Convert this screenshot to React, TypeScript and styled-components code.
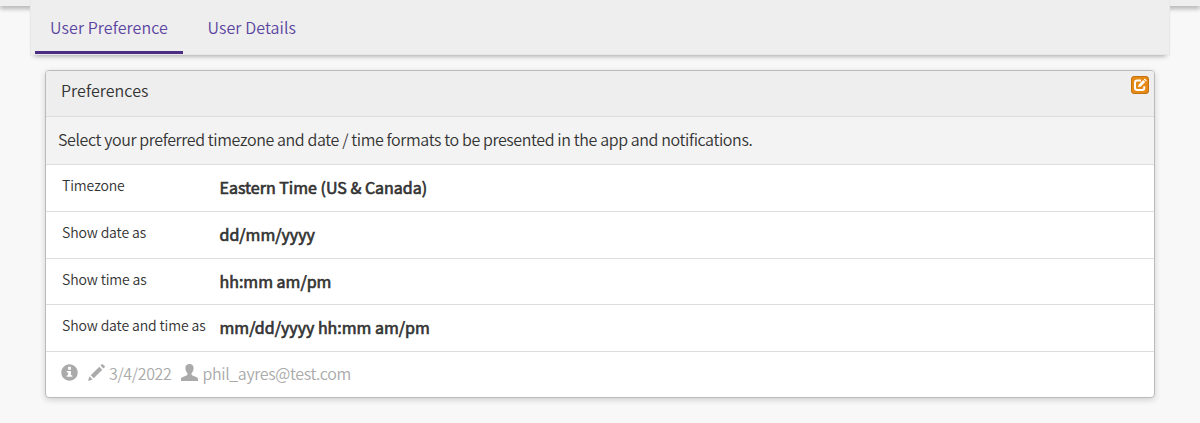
import React from "react";
import styled, { createGlobalStyle } from "styled-components";

const Global = createGlobalStyle`
  * { box-sizing: border-box; }
  body {
    margin: 0;
    background: #f8f8f8;
    color: #333;
    font-family: "Noto Sans CJK JP", "Noto Sans", sans-serif;
    font-size: 16px;
    font-weight: 350;
    line-height: 24px;
  }
`;

const Page = styled.div`
  height: 423px;
  overflow: hidden;
`;

const TopBar = styled.div`
  height: 6px;
  background: #eee;
  box-shadow: 0 3px 4px rgba(0, 0, 0, 0.27);
`;

const TabBar = styled.nav`
  position: relative;
  display: flex;
  align-items: flex-end;
  height: 55px;
  margin: -6px 30px 0;
  padding: 0 4px;
  background: #eee;
  border: 1px solid #e7e7e7;
  border-top: 0;
  box-shadow: 0 5px 5px -4px rgba(0, 0, 0, 0.35);
`;

const Tab = styled.a<{ $active?: boolean }>`
  height: 54px;
  padding: 15px 15px 0;
  margin-right: 9.5px;
  color: #5b45a0;
  letter-spacing: 0.1px;
  border-bottom: 3px solid ${(p) => (p.$active ? "#4b2e83" : "transparent")};
`;

const Card = styled.section`
  display: flex;
  flex-direction: column;
  height: 328px;
  margin: 15px 45px 0;
  background: #fff;
  border: 1px solid #bbb;
  border-radius: 4px;
  box-shadow: 0 2px 6px rgba(0, 0, 0, 0.16);
  overflow: hidden;
`;

const Heading = styled.header`
  display: flex;
  justify-content: space-between;
  height: 45px;
  padding: 5px 5px 0 15px;
  background: #eee;
`;

const Title = styled.div`
  padding-top: 2px;
  letter-spacing: 0.08px;
`;

const EditButton = styled.button`
  display: flex;
  align-items: center;
  justify-content: center;
  width: 18px;
  height: 18px;
  padding: 0;
  color: #fff;
  background: #e68a17;
  border: 1px solid #c5710c;
  border-radius: 3px;
`;

const Caption = styled.div`
  height: 48px;
  padding: 10px 12px 0;
  letter-spacing: -0.385px;
  background: #f3f3f3;
  border-top: 1px solid #ddd;
`;

const Row = styled.div<{ $height: number }>`
  display: flex;
  height: ${(p) => p.$height}px;
  border-top: 1px solid #ddd;
  padding: 8px 16px 0;
`;

const Label = styled.div`
  width: 157.5px;
  font-size: 14px;
  letter-spacing: -0.13px;
`;

const Value = styled.div`
  padding-top: 2px;
  font-weight: 400;
  -webkit-text-stroke: 0.65px #333;
`;

const Footer = styled.footer`
  display: flex;
  height: 46px;
  padding: 9px 15px 0;
  color: #aaa;
  letter-spacing: -0.35px;
  border-top: 1px solid #ddd;
`;

const Meta = styled.span<{ $gap: number }>`
  display: flex;
  margin-right: ${(p) => p.$gap}px;
`;

const Icon = styled.svg`
  width: 17px;
  height: 17px;
  margin: 3px 4px 0 0;
  fill: currentColor;
`;

const EditIcon = styled.svg`
  width: 14px;
  height: 14px;
`;

const preferences = [
  { label: "Timezone", value: "Eastern Time (US & Canada)", height: 47 },
  { label: "Show date as", value: "dd/mm/yyyy", height: 47 },
  { label: "Show time as", value: "hh:mm am/pm", height: 46 },
  { label: "Show date and time as", value: "mm/dd/yyyy hh:mm am/pm", height: 47 },
];

const InfoSign = () => (
  <Icon viewBox="0 0 1200 1200">
    <path
      transform="matrix(1 0 0 -1 0 1200)"
      d="M600 1178q118 0 225 -45.5t184.5 -123t123 -184.5t45.5 -225t-45.5 -225t-123 -184.5t-184.5 -123t-225 -45.5t-225 45.5t-184.5 123t-123 184.5t-45.5 225t45.5 225t123 184.5t184.5 123t225 45.5zM675 1000h-150q-10 0 -17.5 -7.5t-7.5 -17.5v-150q0 -10 7.5 -17.5t17.5 -7.5h150q10 0 17.5 7.5t7.5 17.5v150q0 10 -7.5 17.5t-17.5 7.5zM675 700h-250q-10 0 -17.5 -7.5t-7.5 -17.5v-50q0 -10 7.5 -17.5t17.5 -7.5h75v-200h-75q-10 0 -17.5 -7.5t-7.5 -17.5v-50q0 -10 7.5 -17.5t17.5 -7.5h350q10 0 17.5 7.5t7.5 17.5v50q0 10 -7.5 17.5t-17.5 7.5h-75v275q0 10 -7.5 17.5t-17.5 7.5z"
    />
  </Icon>
);

const Pencil = () => (
  <Icon viewBox="-16 0 1226 1226">
    <path
      transform="matrix(1 0 0 -1 0 1210)"
      d="M1011 1210q19 0 33 -13l153 -153q13 -14 13 -33t-13 -33l-99 -92l-214 214l95 96q13 14 32 14zM1013 800l-615 -614l-214 214l614 614zM317 96l-333 -112l110 335z"
    />
  </Icon>
);

const User = () => (
  <Icon viewBox="0 0 17 17">
    <path d="M8.5 0C6.1 0 4.400 1.600 4.400 4c0 1.900.700 3.800 1.800 5.100.500.600.500 1.300 0 1.800-.300.400-.800.600-1.400.800L1.300 13.200C.500 13.600 0 14.200 0 15V17h17v-2c0-.800-.500-1.400-1.300-1.800L12.200 11.700c-.600-.200-1.100-.400-1.400-.800-.500-.500-.500-1.200 0-1.800C11.900 7.800 12.600 5.900 12.600 4c0-2.400-1.700-4-4.100-4z" />
  </Icon>
);

const Edit = () => (
  <EditIcon viewBox="0 0 14 14" fill="none">
    <path d="M8 2.500H4.200Q2 2.500 2 4.700v5Q2 12 4.200 12h5Q11.300 12 11.300 9.700V8.300" stroke="currentColor" strokeWidth="2" />
    <path d="M5 9.300l.8-2.800 4.400-4.400 2 2-4.400 4.400zM10.900 1.400l.8-.8 2 2-.8.800z" fill="currentColor" />
  </EditIcon>
);

export default function App() {
  return (
    <>
      <Global />
      <Page>
        <TopBar />
        <TabBar>
          <Tab $active>User Preference</Tab>
          <Tab>User Details</Tab>
        </TabBar>
        <Card>
          <Heading>
            <Title>Preferences</Title>
            <EditButton aria-label="Edit">
              <Edit />
            </EditButton>
          </Heading>
          <Caption>
            Select your preferred timezone and date / time formats to be presented in the app and notifications.
          </Caption>
          {preferences.map((p) => (
            <Row key={p.label} $height={p.height}>
              <Label>{p.label}</Label>
              <Value>{p.value}</Value>
            </Row>
          ))}
          <Footer>
            <Meta $gap={6}>
              <InfoSign />
            </Meta>
            <Meta $gap={10}>
              <Pencil />
              3/4/2022
            </Meta>
            <Meta $gap={0}>
              <User />
              phil_ayres@test.com
            </Meta>
          </Footer>
        </Card>
      </Page>
    </>
  );
}
